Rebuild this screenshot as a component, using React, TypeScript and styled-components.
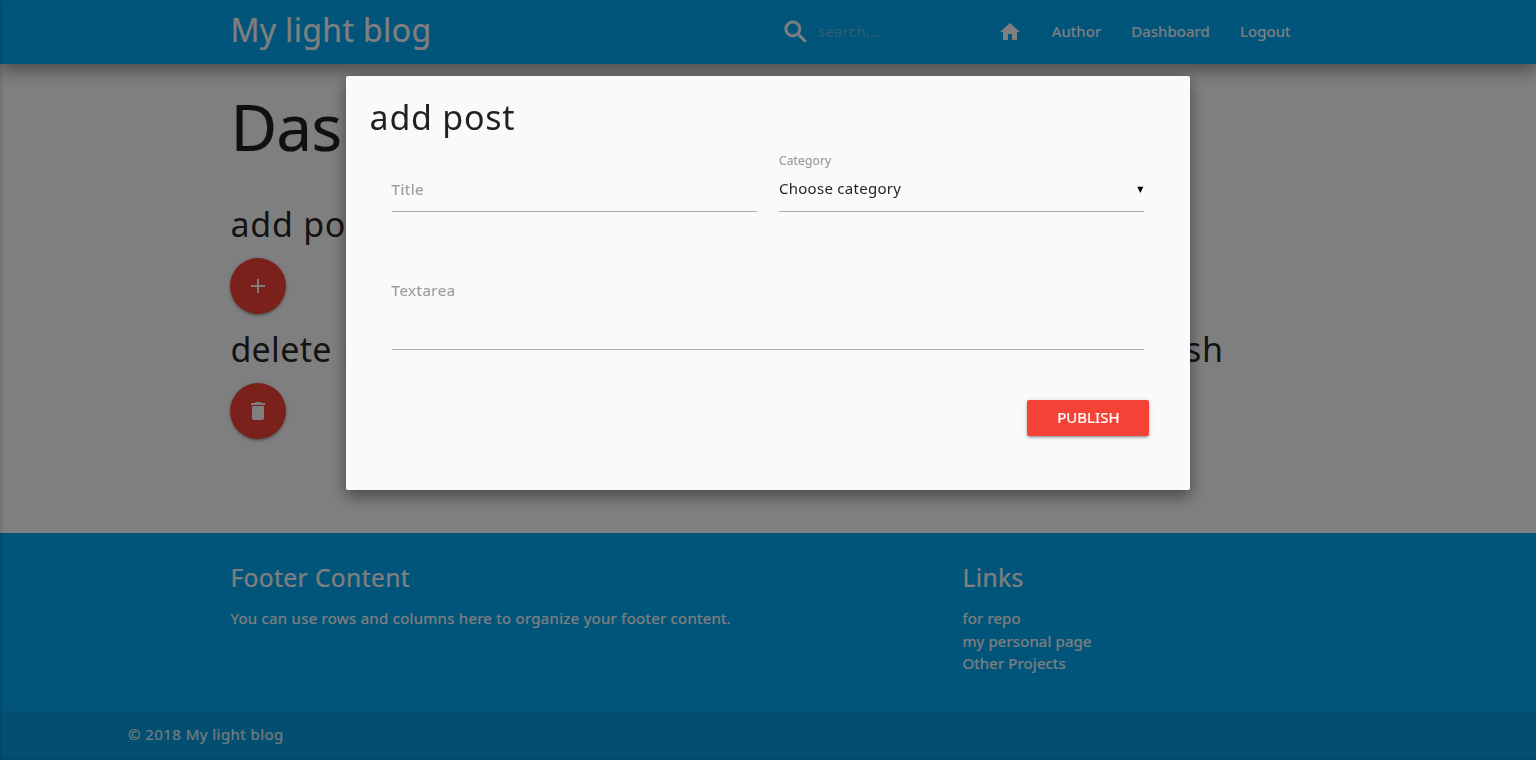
import React from 'react';
import styled, { createGlobalStyle } from 'styled-components';

const GlobalStyle = createGlobalStyle`
  *, *::before, *::after { box-sizing: border-box; }
  body {
    margin: 0;
    background: #fff;
    color: rgba(0, 0, 0, 0.87);
    font: 400 15px/22.5px "Noto Sans", sans-serif;
    letter-spacing: 0.27px;
    -webkit-text-stroke: 0.2px;
    overflow: hidden;
  }
  h1, h4, h5, p, ul { margin: 0; padding: 0; font-weight: 400; }
  ul { list-style: none; }
`;

const Page = styled.div`
  display: flex;
  flex-direction: column;
  height: 760px;
`;

const Container = styled.div`
  width: 70%;
  margin: 0 auto;
`;

const Header = styled.header`
  position: relative;
  height: 64px;
  flex: none;
  color: #fff;
  background: #03a9f4;
  box-shadow: 0 8px 17px 0 rgba(0, 0, 0, 0.24), 0 5px 15px 0 rgba(0, 0, 0, 0.2);
`;

const Nav = styled(Container)`
  display: flex;
  height: 64px;
`;

const Brand = styled.div`
  flex: 1;
  font-size: 32px;
  line-height: 60px;
  letter-spacing: 0.35px;
`;

const Search = styled.label`
  display: flex;
  align-items: center;
  width: 202px;
`;

const SearchHint = styled.span`
  margin-left: 7px;
  line-height: 60px;
  padding-bottom: 2px;
  color: rgba(209, 209, 209, 0.42);
`;

const NavItem = styled.a`
  display: flex;
  align-items: center;
  height: 64px;
  padding: 0 15px;
`;

const NavText = styled.span`
  line-height: 60px;
  padding-bottom: 2px;
  letter-spacing: 0.12px;
`;

const Icon = styled.svg<{ $size: number; $bold?: boolean }>`
  display: block;
  flex: none;
  width: ${(p) => p.$size}px;
  height: ${(p) => p.$size}px;
  fill: currentColor;
  stroke: ${(p) => (p.$bold ? 'currentColor' : 'none')};
  stroke-width: 0.4px;
`;

const Main = styled(Container)`
  flex: 1;
  padding-top: 28px;
`;

const PageTitle = styled.h1`
  font-size: 64px;
  line-height: 70px;
  letter-spacing: -0.8px;
  margin-bottom: 43px;
`;

const SectionTitle = styled.h4<{ $spacing?: number; $indent?: number }>`
  font-size: 34px;
  line-height: 38px;
  letter-spacing: ${(p) => p.$spacing ?? 0.75}px;
  word-spacing: ${(p) => (p.$spacing ? 2.5 : 0)}px;
  padding-left: ${(p) => p.$indent ?? 0}px;
  white-space: nowrap;
  -webkit-text-stroke: 0;
`;

const Actions = styled.section`
  display: grid;
  grid-template-columns: repeat(3, 1fr);
  margin-bottom: 16px;
`;

const RoundButton = styled.button`
  display: flex;
  align-items: center;
  justify-content: center;
  width: 56px;
  height: 56px;
  margin-top: 15px;
  padding: 0;
  border: 0;
  border-radius: 50%;
  color: #fff;
  background: #f44336;
  box-shadow: 0 2px 2px 0 rgba(0, 0, 0, 0.14), 0 3px 1px -2px rgba(0, 0, 0, 0.12), 0 1px 5px 0 rgba(0, 0, 0, 0.2);
`;

const Footer = styled.footer`
  flex: none;
  height: 227px;
  color: #fff;
  background: #03a9f4;
`;

const FooterColumns = styled(Container)`
  display: grid;
  grid-template-columns: 732px 1fr;
  height: 178px;
  padding-top: 31px;
`;

const FooterTitle = styled.h5`
  font-size: 24.6px;
  line-height: 27px;
  letter-spacing: 0.38px;
  margin-bottom: 16px;
`;

const FooterText = styled.p`
  letter-spacing: 0.3px;
`;

const FooterLinks = styled.ul`
  letter-spacing: 0.16px;
`;

const Copyright = styled.div`
  height: 49px;
  padding-left: 128px;
  line-height: 47px;
  letter-spacing: 0.45px;
  color: rgba(255, 255, 255, 0.9);
  background: rgba(51, 51, 51, 0.08);
`;

const Overlay = styled.div`
  position: fixed;
  inset: 0;
  background: rgba(0, 0, 0, 0.5);
  box-shadow: inset 2px -1px 3px rgba(0, 0, 0, 0.12);
`;

const Modal = styled.div`
  position: fixed;
  top: 76px;
  left: 22.5%;
  width: 55%;
  height: 414px;
  padding: 22px 24px;
  border-radius: 2px;
  background: #fafafa;
  box-shadow: 0 8px 17px 0 rgba(0, 0, 0, 0.24), 0 5px 15px 0 rgba(0, 0, 0, 0.25);
`;

const Form = styled.form`
  display: grid;
  grid-template-columns: 1fr 1fr;
  column-gap: 22px;
  padding: 16px 22px 0;
`;

const Field = styled.div<{ $wide?: boolean }>`
  display: flex;
  flex-direction: column;
  justify-content: flex-end;
  grid-column: ${(p) => (p.$wide ? 'span 2' : 'auto')};
  height: ${(p) => (p.$wide ? 138 : 60)}px;
  padding-bottom: ${(p) => (p.$wide ? 48 : 11)}px;
  border-bottom: 1px solid #adadad;
`;

const Placeholder = styled.span`
  color: #9e9e9e;
  letter-spacing: 0.5px;
`;

const SmallLabel = styled.span`
  font-size: 12px;
  line-height: 18px;
  letter-spacing: 0.15px;
  color: #9e9e9e;
  margin-bottom: 7px;
`;

const Choice = styled.span`
  display: flex;
  justify-content: space-between;
  align-items: center;
  margin-bottom: 1px;
  -webkit-text-stroke: 0;
`;

const Caret = styled.span`
  font: 8px/22px "DejaVu Sans", sans-serif;
  letter-spacing: 0;
  padding: 2px 1px 0 0;
  margin-bottom: -2px;
  color: #000;
`;

const Publish = styled.button`
  display: block;
  width: 122px;
  height: 36px;
  margin: 50px 17px 0 auto;
  padding: 0 0 2px;
  border: 0;
  border-radius: 2px;
  font: inherit;
  line-height: 34px;
  letter-spacing: 0.05px;
  color: #fff;
  background: #f44336;
  box-shadow: 0 2px 2px 0 rgba(0, 0, 0, 0.14), 0 3px 1px -2px rgba(0, 0, 0, 0.12), 0 1px 5px 0 rgba(0, 0, 0, 0.2);
`;

const paths = {
  search:
    'M15.5 14h-.79l-.28-.27C15.41 12.59 16 11.11 16 9.5 16 5.91 13.09 3 9.5 3S3 5.91 3 9.5 5.91 16 9.5 16c1.61 0 3.09-.59 4.23-1.57l.27.28v.79l5 4.99L20.49 19l-4.99-5zm-6 0C7.01 14 5 11.99 5 9.5S7.01 5 9.5 5 14 7.01 14 9.5 11.99 14 9.5 14z',
  home: 'M10 20v-6h4v6h5v-8h3L12 3 2 12h3v8z',
  add: 'M19 13h-6v6h-2v-6H5v-2h6V5h2v6h6v2z',
  remove: 'M6 19c0 1.1.9 2 2 2h8c1.1 0 2-.9 2-2V7H6v12zM19 4h-3.5l-1-1h-5l-1 1H5v2h14V4z',
};

const Glyph = ({ name, size = 24, bold }: { name: keyof typeof paths; size?: number; bold?: boolean }) => (
  <Icon $size={size} $bold={bold} viewBox="0 0 24 24">
    <path d={paths[name]} />
  </Icon>
);

export default function App() {
  return (
    <>
      <GlobalStyle />
      <Page>
        <Header>
          <Nav>
            <Brand>My light blog</Brand>
            <Search>
              <Glyph name="search" size={30} bold />
              <SearchHint>search...</SearchHint>
            </Search>
            <NavItem><Glyph name="home" /></NavItem>
            <NavItem><NavText>Author</NavText></NavItem>
            <NavItem><NavText>Dashboard</NavText></NavItem>
            <NavItem><NavText>Logout</NavText></NavItem>
          </Nav>
        </Header>
        <Main>
          <PageTitle>Dashboard</PageTitle>
          <Actions>
            <div>
              <SectionTitle>add post</SectionTitle>
              <RoundButton><Glyph name="add" /></RoundButton>
            </div>
          </Actions>
          <Actions>
            <div>
              <SectionTitle $spacing={0.3}>delete post</SectionTitle>
              <RoundButton><Glyph name="remove" /></RoundButton>
            </div>
            <div />
            <SectionTitle $indent={10}>posts to publish</SectionTitle>
          </Actions>
        </Main>
        <Footer>
          <FooterColumns>
            <div>
              <FooterTitle>Footer Content</FooterTitle>
              <FooterText>You can use rows and columns here to organize your footer content.</FooterText>
            </div>
            <div>
              <FooterTitle>Links</FooterTitle>
              <FooterLinks>
                <li>for repo</li>
                <li>my personal page</li>
                <li>Other Projects</li>
              </FooterLinks>
            </div>
          </FooterColumns>
          <Copyright>© 2018 My light blog</Copyright>
        </Footer>
      </Page>
      <Overlay />
      <Modal>
        <SectionTitle>add post</SectionTitle>
        <Form>
          <Field><Placeholder>Title</Placeholder></Field>
          <Field>
            <SmallLabel>Category</SmallLabel>
            <Choice>Choose category<Caret>▼</Caret></Choice>
          </Field>
          <Field $wide><Placeholder>Textarea</Placeholder></Field>
        </Form>
        <Publish type="button">PUBLISH</Publish>
      </Modal>
    </>
  );
}
